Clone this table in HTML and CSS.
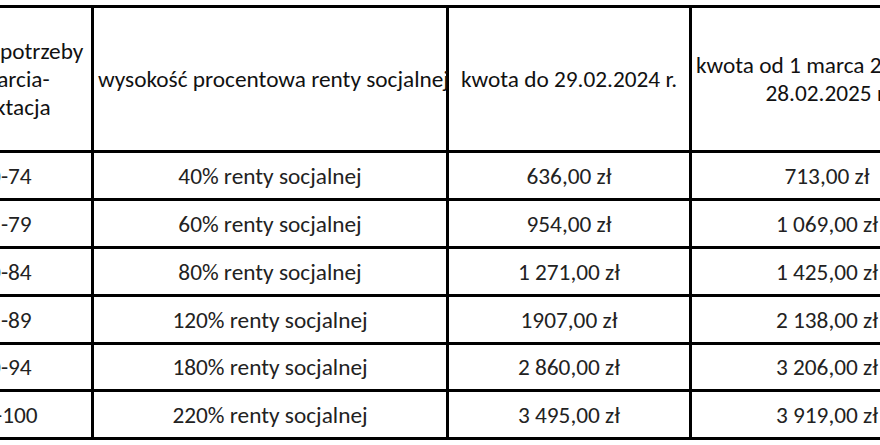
FILE: index.html
```html
<!DOCTYPE html>
<html lang="pl">
<head>
<meta charset="utf-8">
<title>Świadczenie wspierające</title>
<link rel="stylesheet" href="styles.css">
</head>
<body>
<div class="viewport">
  <table class="rates">
    <colgroup>
      <col class="c1"><col class="c2"><col class="c3"><col class="c4">
    </colgroup>
    <thead>
      <tr class="head">
        <th>Poziom potrzeby wsparcia-punktacja</th>
        <th class="nowrap">wysokość procentowa renty socjalnej</th>
        <th>kwota do 29.02.2024 r.</th>
        <th class="wide"><span class="line">kwota od 1 marca 2024 r. do</span><br><span class="line">28.02.2025 r.</span></th>
      </tr>
    </thead>
    <tbody>
      <tr><td>70-74</td><td>40% renty socjalnej</td><td>636,00 zł</td><td>713,00 zł</td></tr>
      <tr><td>75-79</td><td>60% renty socjalnej</td><td>954,00 zł</td><td>1 069,00 zł</td></tr>
      <tr><td>80-84</td><td>80% renty socjalnej</td><td>1 271,00 zł</td><td>1 425,00 zł</td></tr>
      <tr><td>85-89</td><td>120% renty socjalnej</td><td>1907,00 zł</td><td>2 138,00 zł</td></tr>
      <tr class="short"><td>90-94</td><td>180% renty socjalnej</td><td>2 860,00 zł</td><td>3 206,00 zł</td></tr>
      <tr><td>95-100</td><td>220% renty socjalnej</td><td>3 495,00 zł</td><td>3 919,00 zł</td></tr>
    </tbody>
  </table>
</div>
</body>
</html>
```
FILE: styles.css
```css
html, body {
  margin: 0;
  padding: 0;
  background: #ffffff;
  overflow: hidden;
}

.viewport {
  width: 880px;
  height: 445px;
  overflow: hidden;
  padding-top: 5px;
  box-sizing: border-box;
}

.rates {
  margin-left: -85px;
  border-collapse: separate;
  border-spacing: 0;
  border-top: 3px solid #000;
  border-left: 3px solid #000;
  table-layout: fixed;
  width: 1049px;
  font-family: Carlito, Calibri, Lato, "Liberation Sans", sans-serif;
  font-size: 23.3px;
  color: #222222;
}

.c1 { width: 176px; }
.c2 { width: 355px; }
.c3 { width: 243px; }
.c4 { width: 273px; }

.rates th,
.rates td {
  border-right: 3px solid #000;
  border-bottom: 3px solid #000;
  text-align: center;
  vertical-align: middle;
  padding: 0 4px;
  font-weight: normal;
  line-height: 28px;
}

.rates th {
  color: #111;
}

.nowrap {
  white-space: nowrap;
  padding: 0;
}

.wide .line {
  white-space: nowrap;
}

.head { height: 145px; }
tbody tr { height: 48px; }
tbody tr.short { height: 47px; }
```
